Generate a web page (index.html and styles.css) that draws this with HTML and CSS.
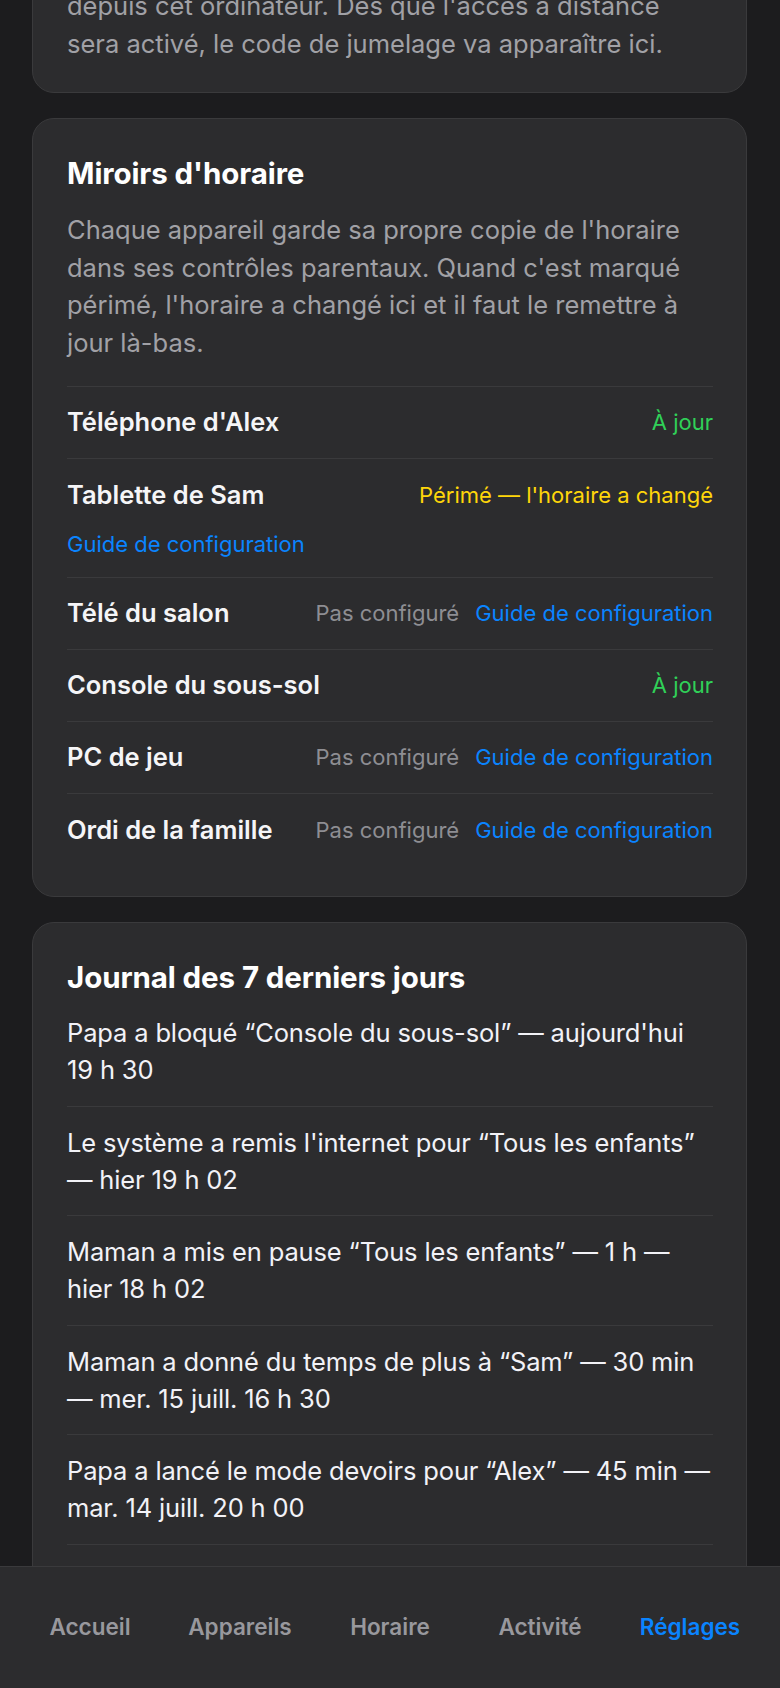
FILE: index.html
```html
<!DOCTYPE html>
<html lang="fr">
<head>
<meta charset="utf-8">
<title>Réglages</title>
<link rel="stylesheet" href="styles.css">
</head>
<body>
<div class="app">
  <main class="scroll">
    <div class="scroll-inner">
      <section class="card card-partial">
        <p class="desc">depuis cet ordinateur. Dès que l'accès à distance sera activé, le code de jumelage va apparaître ici.</p>
      </section>

      <section class="card">
        <h2 class="card-title">Miroirs d'horaire</h2>
        <p class="desc desc-intro">Chaque appareil garde sa propre copie de l'horaire dans ses contrôles parentaux. Quand c'est marqué périmé, l'horaire a changé ici et il faut le remettre à jour là-bas.</p>
        <ul class="mirror-list">
          <li class="mirror">
            <span class="name">Téléphone d'Alex</span>
            <span class="status ok">À jour</span>
          </li>
          <li class="mirror">
            <span class="name">Tablette de Sam</span>
            <span class="status stale">Périmé — l'horaire a changé</span>
            <a class="link" href="#">Guide de configuration</a>
          </li>
          <li class="mirror">
            <span class="name">Télé du salon</span>
            <span class="status none">Pas configuré</span>
            <a class="link" href="#">Guide de configuration</a>
          </li>
          <li class="mirror">
            <span class="name">Console du sous-sol</span>
            <span class="status ok">À jour</span>
          </li>
          <li class="mirror">
            <span class="name">PC de jeu</span>
            <span class="status none">Pas configuré</span>
            <a class="link" href="#">Guide de configuration</a>
          </li>
          <li class="mirror">
            <span class="name">Ordi de la famille</span>
            <span class="status none">Pas configuré</span>
            <a class="link" href="#">Guide de configuration</a>
          </li>
        </ul>
      </section>

      <section class="card card-log">
        <h2 class="card-title journal-title">Journal des 7 derniers jours</h2>
        <ul class="log">
          <li class="entry">Papa a bloqué “Console du sous-sol” — aujourd'hui 19 h 30</li>
          <li class="entry">Le système a remis l'internet pour “Tous les enfants” — hier 19 h 02</li>
          <li class="entry">Maman a mis en pause “Tous les enfants” — 1 h — hier 18 h 02</li>
          <li class="entry">Maman a donné du temps de plus à “Sam” — 30 min — mer. 15 juill. 16 h 30</li>
          <li class="entry">Papa a lancé le mode devoirs pour “Alex” — 45 min — mar. 14 juill. 20 h 00</li>
        </ul>
      </section>
    </div>
  </main>

  <nav class="tabbar">
    <a class="tab" href="#">Accueil</a>
    <a class="tab" href="#">Appareils</a>
    <a class="tab" href="#">Horaire</a>
    <a class="tab" href="#">Activité</a>
    <a class="tab active" href="#">Réglages</a>
  </nav>
</div>
</body>
</html>
```

FILE: styles.css
```css
* {
  box-sizing: border-box;
}

html, body {
  margin: 0;
  padding: 0;
  background: #1c1c1e;
}

body {
  font-family: Inter, "Noto Sans", "Liberation Sans", sans-serif;
  color: #f2f2f7;
  -webkit-font-smoothing: antialiased;
}

.app {
  height: 1688px;
  display: flex;
  flex-direction: column;
  overflow: hidden;
}

.scroll {
  flex: 1;
  overflow: hidden;
}

.scroll-inner {
  display: flex;
  flex-direction: column;
  gap: 25px;
  padding: 0 33px 0 32px;
  margin-top: -44px;
}

.card {
  background: #2c2c2e;
  border: 1px solid #3a3a3c;
  border-radius: 22px;
  padding: 36px 33px 30.5px 34px;
}

.card-partial {
  padding-top: 30px;
  padding-bottom: 30px;
}

.card-log {
  padding-bottom: 80px;
}

.card-title {
  margin: 0;
  font-size: 29.5px;
  line-height: 36px;
  font-weight: 700;
  color: #ffffff;
  letter-spacing: -0.1px;
}

.desc {
  margin: 0;
  font-size: 25.5px;
  line-height: 37.5px;
  color: #a1a1a6;
}

.desc-intro {
  margin-top: 20px;
  margin-bottom: 25px;
}

.mirror-list,
.log {
  list-style: none;
  margin: 0;
  padding: 0;
}

.mirror {
  display: flex;
  flex-wrap: wrap;
  align-items: center;
  column-gap: 16px;
  row-gap: 16px;
  border-top: 1px solid #3a3a3c;
  padding: 17.25px 0 18px;
}

.name {
  margin-right: auto;
  font-size: 25.5px;
  line-height: 36px;
  font-weight: 600;
  color: #f5f5f7;
}

.status {
  font-size: 22px;
  line-height: 30px;
}

.status.ok {
  color: #30d158;
}

.status.stale {
  color: #ffd60a;
}

.status.none {
  color: #8e8e93;
}

.link {
  font-size: 22px;
  line-height: 30px;
  color: #0a84ff;
  text-decoration: none;
}

.journal-title {
  margin-bottom: 2px;
}

.entry {
  font-size: 25.5px;
  line-height: 37.25px;
  letter-spacing: -0.15px;
  color: #f2f2f7;
  padding: 17px 0;
  border-bottom: 1px solid #3a3a3c;
}

.tabbar {
  flex: 0 0 122px;
  display: grid;
  grid-template-columns: repeat(5, 1fr);
  align-items: center;
  padding: 0 15px 2px;
  background: #2c2c2e;
  border-top: 1px solid #3a3a3c;
}

.tab {
  text-align: center;
  font-size: 22.5px;
  font-weight: 600;
  color: #98989d;
  text-decoration: none;
}

.tab.active {
  color: #0a84ff;
}
```
